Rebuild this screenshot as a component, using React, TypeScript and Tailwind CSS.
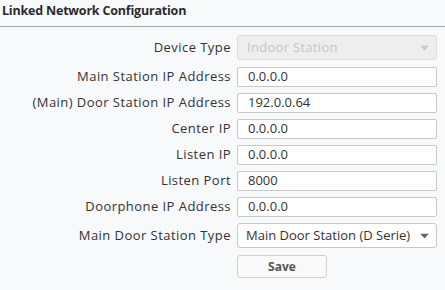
import React from 'react';

const rows: { label: string; value: string }[] = [
  { label: 'Main Station IP Address', value: '0.0.0.0' },
  { label: '(Main) Door Station IP Address', value: '192.0.0.64' },
  { label: 'Center IP', value: '0.0.0.0' },
  { label: 'Listen IP', value: '0.0.0.0' },
  { label: 'Listen Port', value: '8000' },
  { label: 'Doorphone IP Address', value: '0.0.0.0' },
];

const Caret = ({ color }: { color: string }) => (
  <svg width="9" height="5" viewBox="0 0 9 5" className="absolute right-[7px] top-1/2 -translate-y-1/2">
    <path d="M0 0 H9 L4.5 5 Z" fill={color} />
  </svg>
);

const Label = ({ children }: { children: React.ReactNode }) => (
  <div className="w-[231px] shrink-0 text-right text-[13px] tracking-[0.45px] text-[#333]">{children}</div>
);

export default function App() {
  return (
    <div
      className="h-[290px] w-[445px] overflow-hidden bg-[#f8f9fb] text-[#333]"
      style={{ fontFamily: '"Open Sans", "Noto Sans", sans-serif' }}
    >
      <div className="h-[27px] border-b border-[#a8a8a8] pl-[2px] pt-[1px] text-[12.5px] font-bold leading-[20px] tracking-[-0.2px] text-[#2b2b2b]">
        Linked Network Configuration
      </div>

      <div className="flex flex-col pt-[8px]">
        <div className="flex items-center gap-[6px]">
          <Label>Device Type</Label>
          <div className="relative flex h-[25px] w-[200px] items-center rounded-[3px] border border-[#dcdcdc] bg-[#eeeeee] pl-[9px] text-[13px] tracking-[0.3px] text-[#c4c4c4]">
            Indoor Station
            <Caret color="#c8c8c8" />
          </div>
        </div>

        <div className="mt-[7px] flex flex-col gap-[6px]">
          {rows.map((r) => (
            <div key={r.label} className="flex items-center gap-[6px]">
              <Label>{r.label}</Label>
              <div className="flex h-[20px] w-[200px] items-center rounded-[2px] border border-[#c8c8c8] bg-white pl-[10px] text-[13px] text-[#333]">
                {r.value}
              </div>
            </div>
          ))}

          <div className="flex items-center gap-[6px]">
            <Label>Main Door Station Type</Label>
            <div className="relative flex h-[25px] w-[200px] items-center rounded-[3px] border border-[#c8c8c8] bg-white pl-[8px] text-[13px] text-[#333]">
              Main Door Station (D Serie)
              <Caret color="#666" />
            </div>
          </div>
        </div>

        <div className="mt-[7px] flex gap-[6px]">
          <div className="w-[231px] shrink-0" />
          <button className="h-[23px] w-[90px] rounded-[3px] border border-[#d0d0d0] bg-[#f9f9f9] text-[12px] font-bold text-[#555]">
            Save
          </button>
        </div>
      </div>
    </div>
  );
}
